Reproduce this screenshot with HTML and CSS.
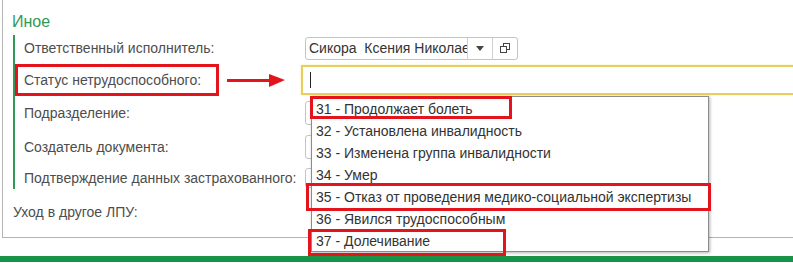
FILE: index.html
```html
<!DOCTYPE html>
<html lang="ru">

<head>
    <meta charset="UTF-8">
    <meta name="viewport" content="width=device-width, initial-scale=1.0">
    <title>Иное</title>
    <link rel="stylesheet" href="styles.css">
</head>

<body>

    <div class="panel">
        <div class="group_title">Иное</div>

        <!-- группа реквизитов -->
        <div class="group">
            <div class="label">Ответственный исполнитель:</div>
            <div class="field_cell">
                <div class="combo">
                    <span class="combo_text">Сикора&nbsp; Ксения Николае</span>
                    <span class="combo_btn"><span class="tri"></span></span>
                    <span class="combo_btn">
                        <svg width="12" height="12" viewBox="0 0 12 12">
                            <rect x="4.5" y="1.5" width="6" height="6" fill="none" stroke="#444" />
                            <rect x="1.5" y="4.5" width="6" height="6" fill="#fff" stroke="#444" />
                        </svg>
                    </span>
                </div>
            </div>

            <div class="label">
                <span class="marked_label">Статус нетрудоспособного:</span>
                <span class="arrow"></span>
            </div>
            <div class="field_cell">
                <div class="status_input"><span class="caret"></span></div>
            </div>

            <div class="label">Подразделение:</div>
            <div class="field_cell"><div class="plain_input"></div></div>

            <div class="label">Создатель документа:</div>
            <div class="field_cell"><div class="plain_input"></div></div>

            <div class="label">Подтверждение данных застрахованного:</div>
            <div class="field_cell"><div class="plain_input small"></div></div>
        </div>

        <div class="outer_row">
            <div class="label">Уход в другое ЛПУ:</div>
        </div>

        <!-- выпадающий список -->
        <ul class="dropdown">
            <li><span class="mark m31"></span>31 - Продолжает болеть</li>
            <li>32 - Установлена инвалидность</li>
            <li>33 - Изменена группа инвалидности</li>
            <li>34 - Умер</li>
            <li><span class="mark m35"></span>35 - Отказ от проведения медико-социальной экспертизы</li>
            <li>36 - Явился трудоспособным</li>
            <li><span class="mark m37"></span>37 - Долечивание</li>
        </ul>
    </div>

    <div class="footer"></div>

</body>

</html>
```

FILE: styles.css
```css
* {
    margin: 0;
    padding: 0;
    box-sizing: border-box;
}

body {
    font-family: "Liberation Sans", Arial, sans-serif;
    font-size: 14px;
    color: #4d4d4d;
    background: #fff;
    overflow: hidden;
}

li {
    list-style: none;
}

.panel {
    position: relative;
    margin-left: 2px;
    height: 238px;
    border-left: 1px solid #b4b4b4;
    border-bottom: 1px solid #b4b4b4;
    padding-top: 12px;
}

.group_title {
    font-size: 16px;
    line-height: 20px;
    color: #2f9a55;
    padding-left: 9px;
}

.group {
    display: grid;
    grid-template-columns: 277px 1fr;
    grid-template-rows: 26px 38px 28px 40px 22px;
    margin-top: 3px;
    margin-left: 10px;
    border-left: 2px solid #2f9a55;
    padding-left: 9px;
}

.label {
    display: flex;
    align-items: center;
    white-space: nowrap;
}

.field_cell {
    display: flex;
    align-items: center;
}

.combo {
    display: flex;
    width: 213px;
    height: 23px;
    margin-left: 4px;
    border: 1px solid #c4c4c4;
    border-radius: 3px;
    overflow: hidden;
}

.combo_text {
    flex: 1;
    overflow: hidden;
    white-space: nowrap;
    color: #333;
    padding-left: 3px;
    line-height: 21px;
}

.combo_btn {
    width: 25px;
    display: flex;
    align-items: center;
    justify-content: center;
    border-left: 1px solid #d0d0d0;
}

.tri {
    width: 0;
    height: 0;
    border-left: 4px solid transparent;
    border-right: 4px solid transparent;
    border-top: 5px solid #444;
}

.marked_label {
    margin-left: -9px;
    padding-left: 6px;
    width: 204px;
    height: 32px;
    line-height: 26px;
    border: 3px solid #e3141c;
}

.arrow {
    position: relative;
    margin-left: 8px;
    width: 48px;
    height: 3px;
    background: #e3141c;
}

.arrow::after {
    content: "";
    position: absolute;
    right: -10px;
    top: -5px;
    border-top: 6px solid transparent;
    border-bottom: 7px solid transparent;
    border-left: 16px solid #e3141c;
}

.status_input {
    width: 600px;
    height: 30px;
    border: 2px solid #e8cf5c;
    box-shadow: 0 0 2px #f6e9a8;
    display: flex;
    align-items: center;
    padding-left: 7px;
}

.caret {
    width: 1px;
    height: 16px;
    background: #222;
}

.plain_input {
    width: 213px;
    height: 24px;
    margin-left: 4px;
    border: 1px solid #c4c4c4;
    border-radius: 3px;
}

.plain_input.small {
    height: 20px;
    width: 40px;
}

.outer_row {
    display: flex;
    padding-left: 10px;
    height: 30px;
    margin-top: 8px;
}

.dropdown {
    position: absolute;
    left: 308px;
    top: 96px;
    width: 398px;
    height: 156px;
    padding-top: 1px;
    background: #fff;
    border: 1px solid #8c8c8c;
    box-shadow: 1px 1px 3px rgba(0, 0, 0, 0.3);
    color: #333;
}

.dropdown li {
    position: relative;
    height: 22px;
    line-height: 22px;
    padding-left: 4px;
    white-space: nowrap;
}

.mark {
    position: absolute;
    border: 3px solid #e3141c;
}

.m31 {
    left: -2px;
    top: -2px;
    width: 202px;
    height: 23px;
}

.m35 {
    left: -6px;
    right: -3px;
    top: -3px;
    height: 28px;
}

.m37 {
    left: -4px;
    top: -1px;
    width: 198px;
    height: 27px;
}

.footer {
    height: 6px;
    margin-top: 18px;
    background: #179447;
}
```
